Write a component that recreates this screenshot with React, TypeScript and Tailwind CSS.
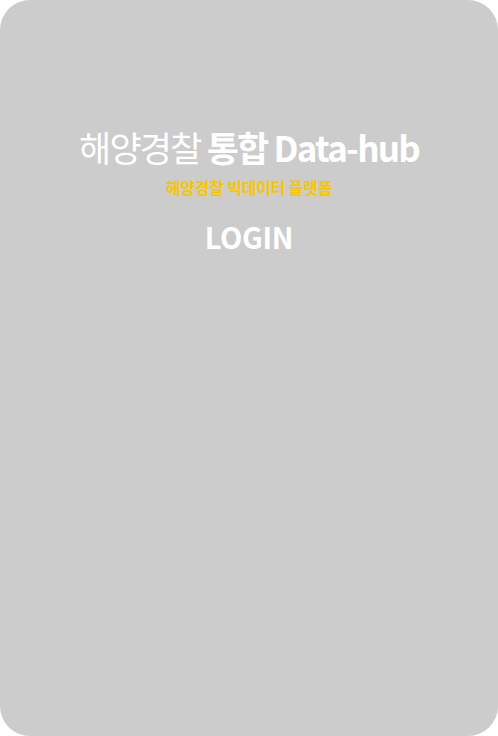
export default function App() {
  return (
    <div className="w-[498px] h-[736px] bg-white">
      <div
        className="w-full h-full rounded-[30px] bg-[#cccccc] flex flex-col items-center pt-[123px]"
        style={{ fontFamily: '"Noto Sans CJK KR", "Noto Sans", sans-serif' }}
      >
        <h1 className="text-[35px] leading-[48px] text-white tracking-[-1.8px] whitespace-nowrap">
          <span className="font-normal">해양경찰 </span>
          <span className="font-bold">통합 Data-hub</span>
        </h1>
        <p className="mt-[5px] text-[16px] leading-[22px] font-bold text-[#f7c600] tracking-[-0.2px]">
          해양경찰 빅데이터 플랫폼
        </p>
        <p className="mt-[19px] text-[29px] leading-[38px] font-semibold text-white tracking-[-0.3px]">
          LOGIN
        </p>
      </div>
    </div>
  )
}
